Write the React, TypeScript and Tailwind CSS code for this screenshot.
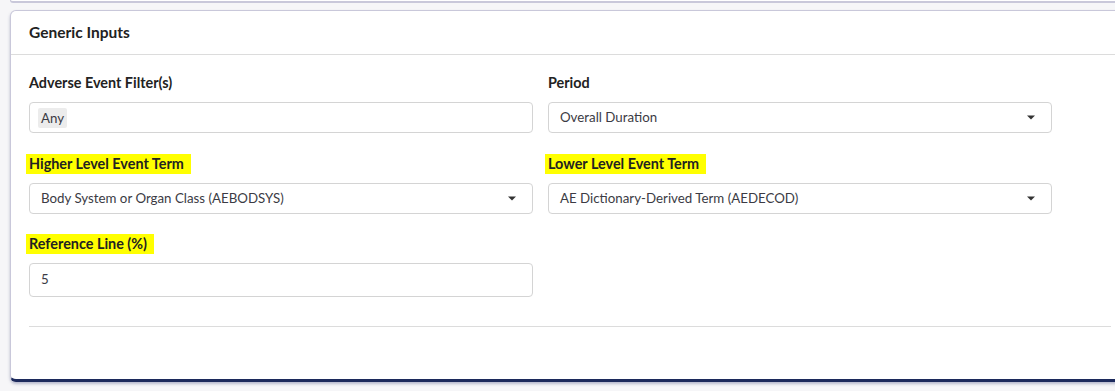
import React from "react";

function Caret() {
  return (
    <svg width="8" height="5" viewBox="0 0 8 5" className="shrink-0">
      <path d="M0 0.5 L8 0.5 L4 4.5 Z" fill="#333" />
    </svg>
  );
}

function Label({ text, hl }: { text: string; hl?: boolean }) {
  return (
    <div className="h-[20px] leading-[20px] mb-[9px] text-[14.4px] font-bold text-[#222]">
      {hl ? (
        <span className="bg-[#ffff00] inline-block pl-[3px] pr-[7px] -ml-[3px] leading-[20px]">{text}</span>
      ) : (
        <span>{text}</span>
      )}
    </div>
  );
}

function Select({ value }: { value: string }) {
  return (
    <div className="h-[31px] border border-[#d4d4d4] rounded-[4px] bg-white flex items-center pl-[11px] pr-[16px] text-[13.3px] text-[#3b3b44]">
      <span className="flex-1">{value}</span>
      <Caret />
    </div>
  );
}

export default function App() {
  return (
    <div
      className="w-[1115px] h-[391px] overflow-hidden bg-[#f6f6f8]"
      style={{ fontFamily: "Lato, 'Noto Sans', sans-serif" }}
    >
      <div className="ml-[10px] h-[3px] bg-white border-b-2 border-l border-[#c9c8da] rounded-bl-[4px]" />
      <div className="ml-[10px] mt-[7px] w-[1120px] bg-white border border-[#c9c8da] border-b-[3px] border-b-[#1c2a5c] rounded-[6px] shadow-[0_2px_3px_rgba(60,70,120,0.35)]">
        <div className="h-[44px] border-b border-[#dcdcdc] flex items-center px-[18px] text-[15.5px] font-bold text-[#222]">
          Generic Inputs
        </div>
        <div className="px-[18px] pt-[18px]">
          <div className="flex gap-[15px]">
            <div className="w-[504px]">
              <Label text="Adverse Event Filter(s)" />
              <div className="h-[31px] border border-[#d4d4d4] rounded-[4px] bg-white flex items-center pl-[8px] text-[13.3px] text-[#3b3b44]">
                <span className="bg-[#ececec] rounded-[2px] px-[3px] h-[20px] leading-[20px]">Any</span>
              </div>
            </div>
            <div className="w-[504px]">
              <Label text="Period" />
              <Select value="Overall Duration" />
            </div>
          </div>
          <div className="flex gap-[15px] mt-[21px]">
            <div className="w-[504px]">
              <Label text="Higher Level Event Term" hl />
              <Select value="Body System or Organ Class (AEBODSYS)" />
            </div>
            <div className="w-[504px]">
              <Label text="Lower Level Event Term" hl />
              <Select value="AE Dictionary-Derived Term (AEDECOD)" />
            </div>
          </div>
          <div className="flex gap-[15px] mt-[20px]">
            <div className="w-[504px]">
              <Label text="Reference Line (%)" hl />
              <div className="h-[34px] border border-[#d4d4d4] rounded-[4px] bg-white flex items-center pl-[11px] text-[13.3px] text-[#3b3b44]">
                5
              </div>
            </div>
          </div>
          <div className="mt-[29px] border-t border-[#dcdcdc] h-[53px]" />
        </div>
      </div>
    </div>
  );
}
